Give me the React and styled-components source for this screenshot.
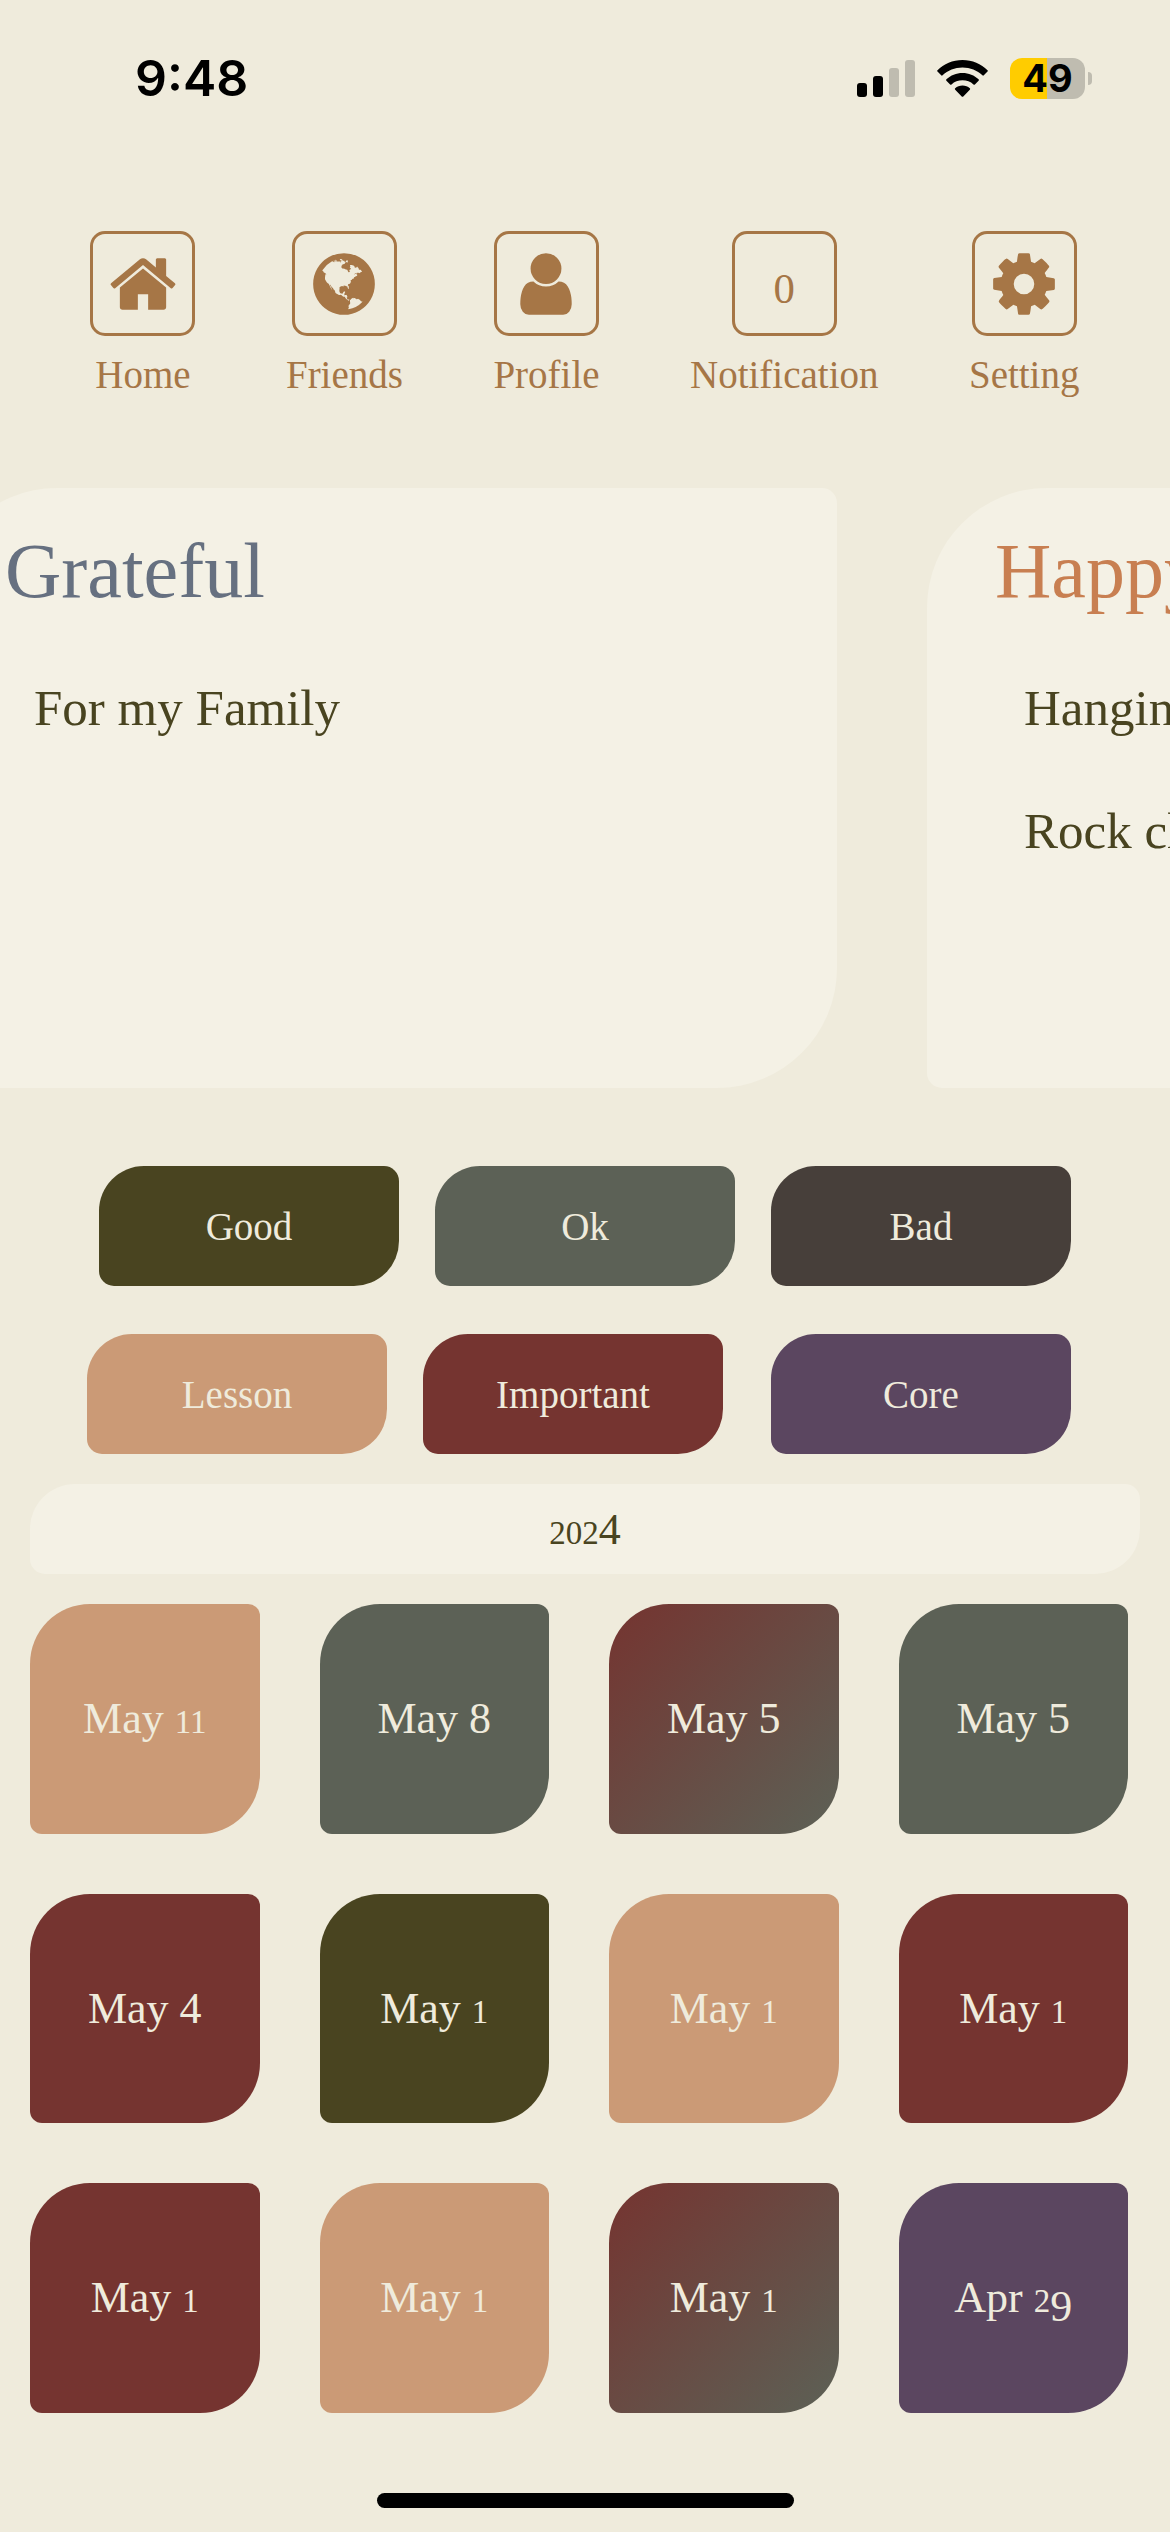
import React from "react";
import styled, { createGlobalStyle, css } from "styled-components";

const color = {
  page: "#efebdc",
  card: "#f4f1e5",
  accent: "#a67646",
  ink: "#494420",
  good: "#494420",
  ok: "#5c6156",
  bad: "#473f3a",
  lesson: "#cb9a76",
  important: "#753430",
  core: "#5b4660",
};

const mixed = `linear-gradient(135deg, ${color.important}, ${color.ok})`;

const GlobalStyle = createGlobalStyle`
  *, *::before, *::after { box-sizing: border-box; }
  body {
    margin: 0;
    background: ${color.page};
    font-family: "Liberation Serif", "Times New Roman", serif;
  }
  button { font: inherit; cursor: pointer; }
  h1, h2, ul, p { margin: 0; padding: 0; font-weight: 400; }
`;

/* Leaf outline shared by cards, tags and tiles: two wide corners, two tight ones. */
const leaf = (wide, tight) => css`
  border-radius: ${wide}px ${tight}px ${wide}px ${tight}px;
`;

const Screen = styled.div`
  display: flex;
  flex-direction: column;
  min-height: 100vh;
  overflow: hidden;
  background: ${color.page};
`;

const StatusBar = styled.header`
  display: flex;
  align-items: center;
  justify-content: space-between;
  height: 156px;
  padding: 0 78px 0 135px;
  margin-bottom: 75px;
  font-family: Inter, "Liberation Sans", sans-serif;
  color: #000;
`;

const Time = styled.span`
  font-size: 50px;
  font-weight: 600;
`;

const Indicators = styled.div`
  display: flex;
  align-items: center;
  gap: 22px;
`;

const BatteryGroup = styled.div`
  display: flex;
  align-items: center;
  gap: 3px;
`;

const Battery = styled.div`
  display: flex;
  align-items: center;
  justify-content: center;
  width: 75px;
  height: 41px;
  border-radius: 12px;
  background: linear-gradient(90deg, #ffcc00 49%, #bfbcb0 49%);
  font-size: 38px;
  font-weight: 700;
  line-height: 41px;
`;

const Nub = styled.div`
  width: 4px;
  height: 13px;
  border-radius: 0 4px 4px 0;
  background: #bfbcb0;
`;

const Nav = styled.nav`
  display: flex;
  justify-content: space-evenly;
  margin-bottom: 90px;
`;

const NavItem = styled.button`
  display: flex;
  flex-direction: column;
  align-items: center;
  gap: 15px;
  padding: 0;
  border: 0;
  background: none;
  color: ${color.accent};
`;

const NavBox = styled.span`
  display: flex;
  align-items: center;
  justify-content: center;
  width: 105px;
  height: 105px;
  border: 3px solid currentColor;
  border-radius: 15px;
  font-size: 57px;
`;

const NavLabel = styled.span`
  font-size: 39px;
  line-height: 47px;
`;

const Carousel = styled.section`
  display: flex;
  gap: 90px;
  margin: 0 0 78px -63px;
`;

const Card = styled.article`
  flex: 0 0 900px;
  min-height: 600px;
  padding: 36px 68px;
  background: ${color.card};
  ${leaf(120, 15)}
`;

const CardTitle = styled.h1`
  font-size: 78px;
  line-height: 94px;
  color: ${(p) => p.$tone};
`;

const Entries = styled.ul`
  display: flex;
  flex-direction: column;
  gap: 63px;
  padding: 60px 0 0 29px;
  list-style: none;
  font-size: 51px;
  line-height: 60px;
  color: ${color.ink};
`;

const Tags = styled.section`
  display: flex;
  flex-direction: column;
  gap: 48px;
  margin-bottom: 30px;
`;

const TagRow = styled.div`
  display: flex;
  justify-content: center;
  gap: 36px;
  padding-right: ${(p) => (p.$spread ? 12 : 0)}px;

  & > :last-child {
    margin-left: ${(p) => (p.$spread ? 12 : 0)}px;
  }
`;

const Tag = styled.button`
  width: 300px;
  height: 120px;
  padding: 0;
  border: 0;
  background: ${(p) => p.$fill};
  color: ${color.page};
  font-size: 39px;
  ${leaf(45, 15)}
`;

const Year = styled.h2`
  display: flex;
  align-items: center;
  justify-content: center;
  height: 90px;
  margin: 0 30px 30px;
  background: ${color.card};
  color: ${color.ink};
  font-size: 44px;
  ${leaf(45, 15)}
`;

const Days = styled.section`
  display: grid;
  grid-template-columns: repeat(4, 1fr);
  gap: 60px;
  padding: 0 42px 0 30px;
`;

const Day = styled.button`
  aspect-ratio: 1;
  padding: 0;
  border: 0;
  background: ${(p) => p.$fill};
  color: ${color.page};
  font-size: 44px;
  ${leaf(60, 12)}
`;

const HomeIndicator = styled.div`
  width: 417px;
  height: 15px;
  margin: auto auto 24px;
  border-radius: 8px;
  background: #000;
`;

/* Old-style numerals: 0, 1 and 2 near x-height, 9 hanging below the baseline. */
const SmallDigits = styled.span`
  font-size: 0.75em;
  line-height: 0;
`;

const HangingDigit = styled.span`
  line-height: 0;
  vertical-align: -0.2em;
`;

function OldStyle({ text }) {
  return (
    <span>
      {text.split(/([012]+|9)/).map((part, i) => {
        if (/^[012]+$/.test(part)) return <SmallDigits key={i}>{part}</SmallDigits>;
        if (part === "9") return <HangingDigit key={i}>{part}</HangingDigit>;
        return part;
      })}
    </span>
  );
}

const glyphs = {
  home: "M1472 992v480q0 26-19 45t-45 19h-384v-384h-256v384h-384q-26 0-45-19t-19-45v-480q0-1 .5-3t.5-3l575-474 575 474q1 2 1 6zm223-69l-62 74q-8 9-21 11h-3q-13 0-21-7l-692-577-692 577q-12 8-24 7-13-2-21-11l-62-74q-8-10-7-23.5t11-21.5l719-599q32-26 76-26t76 26l244 204v-195q0-14 9-23t23-9h192q14 0 23 9t9 23v408l219 182q10 8 11 21.5t-7 23.5z",
  globe:
    "M896 128q209 0 385.5 103t279.5 279.5 103 385.5-103 385.5-279.5 279.5-385.5 103-385.5-103-279.5-279.5-103-385.5 103-385.5 279.5-279.5 385.5-103zm274 521q-2 1-9.5 9.5t-13.5 9.5q2 0 4.5-5t5-11 3.5-7q6-7 22-15 14-6 52-12 34-8 51 11-2-2 9.5-13t14.5-12q3-2 15-4.5t15-7.5l2-22q-12 1-17.5-7t-6.5-21q0 2-6 8 0-7-4.5-8t-11.5 1-9 1q-10-3-15-7.5t-8-16.5-4-15q-2-5-9.5-11t-9.5-10q-1-2-2.5-5.5t-3-6.5-4-5.5-5.5-2.5-7 5-7.5 10-4.5 5q-3-2-6-1.5t-4.5 1-4.5 3-5 3.5q-3 2-8.5 3t-8.5 2q15-5-1-11-10-4-16-3 9-4 7.5-12t-8.5-14h5q-1-4-8.5-8.5t-17.5-8.5-13-6q-8-5-34-9.5t-33-.5q-5 6-4.5 10.5t4 14 3.5 12.5q1 6-5.5 13t-6.5 12q0 7 14 15.5t10 21.5q-3 8-16 16t-16 12q-5 8-1.5 18.5t10.5 16.5q2 2 1.5 4t-3.5 4.5-5.5 4-6.5 3.5l-3 2q-11 5-20.5-6t-13.5-26q-7-25-16-30-23-8-29 1-5-13-41-26-25-9-58-4 6-1 0-15-7-15-19-12 3-6 4-17.5t1-13.5q3-13 12-23 1-1 7-8.5t9.5-13.5.5-6q35 4 50-11 5-5 11.5-17t10.5-17q9-6 14-5.5t14.5 5.5 14.5 5q14 1 15.5-11t-7.5-20q12 1 3-17-4-7-8-9-12-4-27 5-8 4 2 8-1-1-9.5 10.5t-16.5 17.5-16-5q-1-1-5.5-13.5t-9.5-13.5q-8 0-16 15 3-8-11-15t-24-8q19-12-8-27-7-4-20.5-5t-19.5 4q-5 7-5.5 11.5t5 8 10.5 5.5 11.5 4 8.5 3q14 10 8 14-2 1-8.5 3.5t-11.5 4.5-6 4q-3 4 0 14t-2 14q-5-5-9-17.5t-7-16.5q7 9-25 6l-10-1q-4 0-16 2t-20.5 1-13.5-8q-4-8 0-20 1-4 4-2-4-3-11-9.5t-10-8.5q-46 15-94 41 6 1 12-1 5-2 13-6.5t10-5.5q34-14 42-7l5-5q14 16 20 25-7-4-30-1-20 6-22 12 7 12 5 18-4-3-11.5-10t-14.5-11-15-5q-16 0-22 1-146 80-235 222 7 7 12 8 4 1 5 9t2.5 11 11.5-3q9 8 3 19 1-1 44 27 19 17 21 21 3 11-10 18-1-2-9-9t-9-4q-3 5 .5 18.5t10.5 12.5q-7 0-9.5 16t-2.5 35.5-1 23.5l2 1q-3 12 5.5 34.5t21.5 19.5q-13 3 20 43 6 8 8 9 3 2 12 7.5t15 10 10 10.5q4 5 10 22.5t14 23.5q-2 6 9.5 20t10.5 23q-1 0-2.5 1t-2.5 1q3 7 15.5 14t15.5 13q1 3 2 10t3 11 8 2q2-20-24-62-15-25-17-29-3-5-5.5-15.5t-4.5-14.5q2 0 6 1.5t8.5 3.5 7.5 4 2 3q-3 7 2 17.5t12 18.5 17 19 12 13q6 6 14 19.5t0 13.5q9 0 20 10.5t17 19.5q5 8 8 26t5 24q2 7 8.5 13.5t12.5 9.5l16 8 13 7q5 2 18.5 10.5t21.5 11.5q10 4 16 4t14.5-2.5 13.5-3.5q15-2 29 15t21 21q36 19 55 11-2 1 .5 7.5t8 15.5 9 14.5 5.5 8.5q5 6 18 15t18 15q6-4 7-9-3 8 7 20t18 10q14-3 14-32-31 15-49-18 0-1-2.5-5.5t-4-8.5-2.5-8.5 0-7.5 5-3q9 0 10-3.5t-2-12.5-4-13q-1-8-11-20t-12-15q-5 9-16 8t-16-9q0 1-1.5 5.5t-1.5 6.5q-13 0-15-1 1-3 2.5-17.5t3.5-22.5q1-4 5.5-12t7.5-14.5 4-12.5-4.5-9.5-17.5-2.5q-19 1-26 20-1 3-3 10.5t-5 11.5-9 7q-7 3-24 2t-24-5q-13-8-22.5-29t-9.5-37q0-10 2.5-26.5t3-25-5.5-24.5q3-2 9-9.5t10-10.5q2-1 4.5-1.5t4.5 0 4-1.5 3-6q-1-1-4-3-3-3-4-3 7 3 28.5-1.5t27.5 1.5q15 11 22-2 0-1-2.5-9.5t-.5-13.5q5 27 29 9 3 3 15.5 5t17.5 5q3 2 7 5.5t5.5 4.5 5-.5 8.5-6.5q10 14 12 24 11 40 19 44 7 3 11 2t4.5-9.5 0-14-1.5-12.5l-1-8v-18l-1-8q-15-3-18.5-12t1.5-18.5 15-18.5q1-1 8-3.5t15.5-6.5 12.5-8q21-19 15-35 7 0 11-9-1 0-5-3t-7.5-5-4.5-2q9-5 2-16 5-3 7.5-11t7.5-10q9 12 21 2 7-8 1-16 5-7 20.5-10.5t18.5-9.5q7 2 8-2t1-12 3-12q4-5 15-9t13-5l17-11q3-4 0-4 18 2 31-11 10-11-6-20 3-6-3-9.5t-15-5.5q3-1 11.5-.5t10.5-1.5q15-10-7-16-17-5-43 12zm-163 877q206-36 351-189-3-3-12.5-4.5t-12.5-3.5q-18-7-24-8 1-7-2.5-13t-8-9-12.5-8-11-7q-2-2-7-6t-7-5.5-7.5-4.5-8.5-2-10 1l-3 1q-3 1-5.5 2.5t-5.5 3-4 3 0 2.5q-21-17-36-22-5-1-11-5.5t-10.5-7-10-1.5-11.5 7q-5 5-6 15t-2 13q-7-5 0-17.5t2-18.5q-3-6-10.5-4.5t-12 4.5-11.5 8.5-9 6.5-8.5 5.5-8.5 7.5q-3 4-6 12t-5 11q-2-4-11.5-6.5t-9.5-5.5q2 10 4 35t5 38q7 31-12 48-27 25-29 40-4 22 12 26 0 7-8 20.5t-7 21.5q0 6 2 16z",
  user: "M1536 1399q0 109-62.5 187t-150.5 78h-854q-88 0-150.5-78t-62.5-187q0-85 8.5-160.5t31.5-152 58.5-131 94-89 134.5-34.5q131 128 313 128t313-128q76 0 134.5 34.5t94 89 58.5 131 31.5 152 8.5 160.5zm-256-887q0 159-112.5 271.5t-271.5 112.5-271.5-112.5-112.5-271.5 112.5-271.5 271.5-112.5 271.5 112.5 112.5 271.5z",
  cog: "M1152 896q0-106-75-181t-181-75-181 75-75 181 75 181 181 75 181-75 75-181zm512-109v222q0 12-8 23t-20 13l-185 28q-19 54-39 91 35 50 107 138 10 12 10 25t-9 23q-27 37-99 108t-94 71q-12 0-26-9l-138-108q-44 23-91 38-16 136-29 186-7 28-36 28h-222q-14 0-24.5-8.5t-11.5-21.5l-28-184q-49-16-90-37l-141 107q-10 9-25 9-14 0-25-11-126-114-165-168-7-10-7-23 0-12 8-23 15-21 51-66.5t54-70.5q-27-50-41-99l-183-27q-13-2-21-12.5t-8-23.5v-222q0-12 8-23t19-13l186-28q14-46 39-92-40-57-107-138-10-12-10-24 0-10 9-23 26-36 98.5-107.5t94.5-71.5q13 0 26 10l138 107q44-23 91-38 16-136 29-186 7-28 36-28h222q14 0 24.5 8.5t11.5 21.5l28 184q49 16 90 37l142-107q9-9 24-9 13 0 25 10 129 119 165 170 7 8 7 22 0 12-8 23-15 21-51 66.5t-54 70.5q26 50 41 98l183 28q13 2 21 12.5t8 23.5z",
};

const Glyph = ({ name }) => (
  <svg width="72" height="72" viewBox="0 0 1792 1792" fill="currentColor" aria-hidden="true">
    <path d={glyphs[name]} />
  </svg>
);

const Signal = () => (
  <svg width="58" height="37" viewBox="0 0 58 37" aria-label="Signal strength">
    <rect x="0" y="23" width="10" height="14" rx="3" />
    <rect x="16" y="16" width="10" height="21" rx="3" />
    <rect x="32" y="8" width="10" height="29" rx="3" fill="#bfbcb0" />
    <rect x="48" y="0" width="10" height="37" rx="3" fill="#bfbcb0" />
  </svg>
);

const Wifi = () => (
  <svg width="51" height="37" viewBox="0 0 51 37" aria-label="Wi-Fi">
    <path d="M25.500 0C35.300 0 44.200 3.900 50.500 10.200Q51.200 10.900 50.500 11.600L46.800 15.300Q46.100 16 45.400 15.300C40.200 10.300 33.200 7.400 25.500 7.400S10.800 10.300 5.600 15.300Q4.900 16 4.200 15.300L.5 11.600Q-.2 10.900 .5 10.200C6.800 3.900 15.700 0 25.500 0Z" />
    <path d="M25.500 13C31.700 13 37.400 15.400 41.600 19.300Q42.300 20 41.600 20.700L37.900 24.400Q37.200 25.100 36.500 24.400C33.600 21.800 29.700 20.300 25.500 20.300S17.400 21.800 14.500 24.400Q13.800 25.100 13.100 24.400L9.400 20.700Q8.700 20 9.400 19.300C13.600 15.400 19.300 13 25.500 13Z" />
    <path d="M25.500 25.600C28.300 25.600 30.900 26.600 32.800 28.300Q33.500 29 32.800 29.700L26.300 36.400Q25.500 37.200 24.700 36.400L18.200 29.700Q17.500 29 18.200 28.300C20.100 26.600 22.700 25.600 25.500 25.600Z" />
  </svg>
);

const navItems = [
  { label: "Home", glyph: "home" },
  { label: "Friends", glyph: "globe" },
  { label: "Profile", glyph: "user" },
  { label: "Notification", count: "0" },
  { label: "Setting", glyph: "cog" },
];

const cards = [
  { title: "Grateful", tone: "#667080", entries: ["For my Family"] },
  { title: "Happy", tone: "#c87f51", entries: ["Hanging out", "Rock climbing"] },
];

const tagRows = [
  {
    spread: false,
    tags: [
      ["Good", color.good],
      ["Ok", color.ok],
      ["Bad", color.bad],
    ],
  },
  {
    spread: true,
    tags: [
      ["Lesson", color.lesson],
      ["Important", color.important],
      ["Core", color.core],
    ],
  },
];

const days = [
  ["May 11", color.lesson],
  ["May 8", color.ok],
  ["May 5", mixed],
  ["May 5", color.ok],
  ["May 4", color.important],
  ["May 1", color.good],
  ["May 1", color.lesson],
  ["May 1", color.important],
  ["May 1", color.important],
  ["May 1", color.lesson],
  ["May 1", mixed],
  ["Apr 29", color.core],
];

export default function App() {
  return (
    <Screen>
      <GlobalStyle />
      <StatusBar>
        <Time>9:48</Time>
        <Indicators>
          <Signal />
          <Wifi />
          <BatteryGroup>
            <Battery>49</Battery>
            <Nub />
          </BatteryGroup>
        </Indicators>
      </StatusBar>

      <Nav>
        {navItems.map((item) => (
          <NavItem key={item.label} type="button">
            <NavBox>
              {item.glyph ? <Glyph name={item.glyph} /> : <OldStyle text={item.count} />}
            </NavBox>
            <NavLabel>{item.label}</NavLabel>
          </NavItem>
        ))}
      </Nav>

      <Carousel>
        {cards.map((card) => (
          <Card key={card.title}>
            <CardTitle $tone={card.tone}>{card.title}</CardTitle>
            <Entries>
              {card.entries.map((entry) => (
                <li key={entry}>{entry}</li>
              ))}
            </Entries>
          </Card>
        ))}
      </Carousel>

      <Tags>
        {tagRows.map((row, i) => (
          <TagRow key={i} $spread={row.spread}>
            {row.tags.map(([label, fill]) => (
              <Tag key={label} type="button" $fill={fill}>
                {label}
              </Tag>
            ))}
          </TagRow>
        ))}
      </Tags>

      <Year>
        <OldStyle text="2024" />
      </Year>

      <Days>
        {days.map(([label, fill], i) => (
          <Day key={i} type="button" $fill={fill}>
            <OldStyle text={label} />
          </Day>
        ))}
      </Days>

      <HomeIndicator />
    </Screen>
  );
}
